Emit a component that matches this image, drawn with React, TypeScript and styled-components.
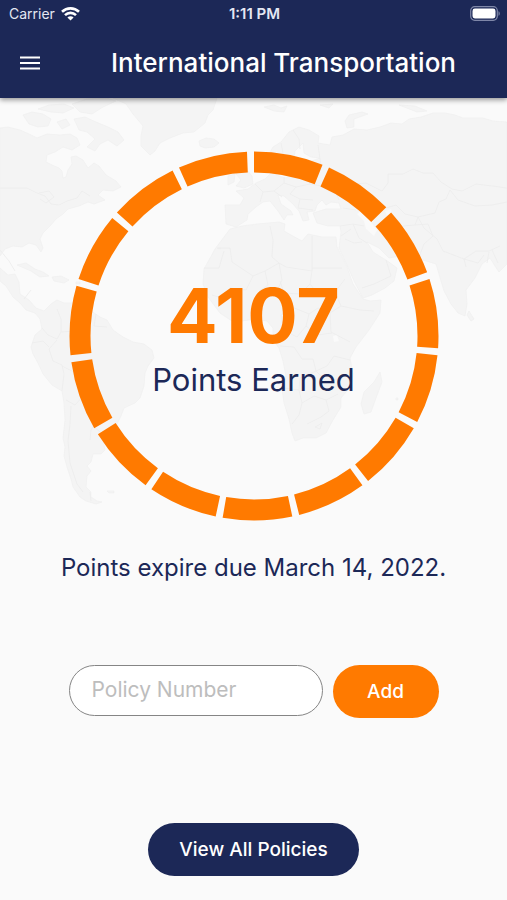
import React from "react";
import styled, { createGlobalStyle } from "styled-components";

const navy = "#1c2857";
const orange = "#ff7a00";

const GlobalStyle = createGlobalStyle`
  *, *::before, *::after { box-sizing: border-box; }
  body {
    margin: 0;
    background: #fafafa;
    color: ${navy};
    font-family: Inter, "Liberation Sans", sans-serif;
  }
  button, input { font: inherit; }
`;

const Screen = styled.div`
  display: flex;
  flex-direction: column;
  min-height: 100vh;
`;

const Header = styled.header`
  position: relative;
  z-index: 1;
  background: ${navy};
  color: #fff;
  box-shadow: 0 2px 5px rgba(0, 0, 0, 0.4);
`;

const StatusBar = styled.div`
  display: grid;
  grid-template-columns: 1fr auto 1fr;
  align-items: center;
  height: 27px;
  padding: 0 7px 0 9px;
  font-size: 14px;
  color: #e4e7f2;
`;

const Carrier = styled.span`
  display: flex;
  align-items: center;
  gap: 6px;
`;

const Clock = styled.time`
  font-size: 15px;
  font-weight: 600;
`;

const BatteryIcon = styled.svg`
  justify-self: end;
`;

const AppBar = styled.div`
  display: grid;
  grid-template-columns: 60px 1fr;
  align-items: center;
  height: 71px;
`;

const MenuButton = styled.button`
  display: grid;
  place-items: center;
  width: 60px;
  height: 60px;
  padding: 0;
  border: 0;
  background: none;
  color: inherit;
  cursor: pointer;
`;

const Title = styled.h1`
  margin: 0;
  font-size: 26px;
  font-weight: 500;
  line-height: 32px;
  text-align: center;
  white-space: nowrap;
`;

const Main = styled.main`
  position: relative;
  flex: 1;
  display: flex;
  flex-direction: column;
  align-items: center;
  padding: 53px 24px 24px;
`;

const WorldMap = styled.svg`
  position: absolute;
  top: 0;
  left: 0;
  width: 100%;
`;

const Gauge = styled.section`
  position: relative;
  display: grid;
  place-items: center;
  width: 100%;
  max-width: 370px;
  aspect-ratio: 1;

  > * { grid-area: 1 / 1; }
`;

const Ring = styled.svg`
  width: 100%;
  height: 100%;
`;

const Score = styled.div`
  display: flex;
  flex-direction: column;
  align-items: center;
  padding-top: 4px;
`;

const Points = styled.strong`
  color: ${orange};
  font-size: 75px;
  font-weight: 700;
  line-height: 84px;
`;

const PointsLabel = styled.span`
  font-size: 31px;
  line-height: 44px;
`;

const Expiry = styled.p`
  position: relative;
  margin: 31px 0 0;
  font-size: 24px;
  line-height: 32px;
  white-space: nowrap;
`;

const PolicyForm = styled.form`
  display: flex;
  align-items: flex-start;
  gap: 10px;
  width: 100%;
  max-width: 370px;
  margin-top: 81px;
`;

const PolicyInput = styled.input`
  flex: 1;
  min-width: 0;
  height: 51px;
  padding: 0 22px 2px;
  border: 1px solid #858585;
  border-radius: 26px;
  background: #fff;
  color: ${navy};
  font-size: 21px;
  outline-color: ${navy};

  &::placeholder { color: #bdbdbd; opacity: 1; }
`;

const PillButton = styled.button<{ $fill: string; $width: number }>`
  width: ${(p) => p.$width}px;
  height: 53px;
  padding: 0;
  border: 0;
  border-radius: 27px;
  background: ${(p) => p.$fill};
  color: #fff;
  font-size: 19px;
  font-weight: 500;
  cursor: pointer;
`;

const Footer = styled.div`
  margin-top: auto;
`;

const land = [
  // North America
  "M0 128L8 127 20 130 29 134 37 138 47 134 60 135 70 134 77 138 80 145 72 150 63 147 55 152 47 155 46 162 52 165 59 168 62 171 63 178 66 177 68 170 72 164 71 157 76 156 83 160 88 168 94 163 99 166 106 175 116 181 121 187 113 191 103 190 98 195 105 200 94 204 88 202 79 206 68 209 63 214 56 219 50 226 43 233 40 239 43 248 41 252 36 245 29 243 22 247 13 246 5 249 0 256Z",
  // Central and South America
  "M0 268L8 275 15 274 19 282 20 294 29 300 36 308 44 311 51 304 57 300 64 303 80 303 90 310 100 317 107 320 113 330 123 337 133 342 144 344 152 350 154 358 148 366 145 373 144 386 140 398 135 403 124 408 121 416 115 428 109 434 103 440 105 450 101 454 93 454 91 462 87 466 91 471 87 476 86 487 91 492 91 497 97 501 102 502 96 504 86 501 80 497 73 487 71 479 67 467 64 456 65 447 63 438 65 420 64 403 62 391 52 385 43 374 38 363 33 354 31 347 35 335 42 329 40 319 35 313 26 310 20 303 13 297 6 286 0 281Z",
  // Caribbean
  "M17 265L26 263 35 269 43 272 49 276 40 277 31 271ZM52 277L61 276 69 280 64 283 54 281ZM76 282h4v2h-4Z",
  // Arctic islands
  "M23 115L32 112 43 114 51 119 48 126 38 127 29 124ZM57 122L66 119 70 125 62 129ZM74 119L85 117 96 122 108 127 118 132 124 140 117 146 108 140 100 144 95 151 87 147 95 139 87 132 79 130ZM38 109L49 105 64 104 74 108 63 113 51 112ZM72 104L87 99 107 98 116 101 103 107 92 114 80 112Z",
  // Greenland
  "M113 98L126 104 133 114 143 126 141 136 141 146 150 155 155 151 160 143 170 138 183 133 194 132 205 123 208 115 213 110 217 98Z",
  // Iceland and Britain
  "M199 141L206 138 214 139 219 143 214 147 205 148 200 146ZM237 165L244 161 246 169 252 176 253 184 244 188 236 186 241 180 236 174ZM228 176L235 174 234 182 228 185Z",
  // Eurasia
  "M225 205L240 205 244 198 236 191 248 189 256 183 265 179 270 174 272 166 277 166 276 175 285 178 299 175 308 170 309 162 320 158 311 157 304 153 303 143 295 151 294 159 289 168 283 166 279 159 273 162 269 154 273 147 281 142 289 132 299 127 309 130 319 136 318 143 330 145 332 137 343 135 354 129 367 130 380 127 391 123 402 124 409 119 421 117 433 113 445 113 455 115 463 118 483 118 493 121 507 122 507 264 499 272 495 266 490 258 482 264 475 278 466 290 467 304 465 316 458 313 451 304 444 291 439 274 436 264 423 260 412 257 400 256 389 258 379 248 367 242 373 252 386 260 397 268 394 281 385 288 372 295 363 298 355 283 347 265 339 248 341 232 340 226 328 226 317 223 313 213 326 209 341 209 339 203 331 202 326 205 322 200 317 205 315 211 307 212 309 220 303 221 299 211 293 204 284 196 278 195 281 204 291 211 293 215 287 215 284 220 278 211 270 201 263 202 256 207 248 214 247 220 236 227 226 224Z",
  // Africa
  "M230 229L242 226 257 224 279 222 285 224 284 231 291 235 302 241 308 234 322 237 336 237 337 247 347 267 353 284 363 299 370 301 381 300 380 313 369 330 356 347 350 358 353 374 351 386 341 398 341 407 333 420 326 433 316 438 303 438 295 441 292 433 289 419 284 403 282 389 286 376 283 361 279 348 273 340 273 328 267 321 255 319 242 321 232 321 220 313 208 297 203 284 204 269 215 249Z",
  // Madagascar and smaller islands
  "M380 372L382 382 376 398 371 412 364 414 361 404 364 392 374 382ZM469 311L474 319 471 321 467 315ZM396 398h2v2h-2ZM107 491h7v2h-5ZM218 248h3v1h-3Z",
  "M345 121L349 115 362 112 368 114 354 119 354 127 347 128ZM264 107L274 105 281 108 287 106 284 112 274 111ZM320 105L333 104 329 108ZM399 105L415 106 427 111 417 112Z",
].join("");

const seas =
  "M357 214L362 210 371 213 370 221 377 230 374 236 366 229 364 221ZM333 336L337 335 339 341 334 342ZM385 211L391 209 392 214 387 216Z";

const borders = [
  "M0 188H27L37 193 45 196 51 204 59 205 67 201 77 198 82 191 90 196",
  "M39 193L49 191 54 197 46 203 40 199",
  "M0 250L9 261 15 271M24 299L31 290",
  "M42 328L48 335 57 339 61 332 61 319 57 309M61 332L75 331 84 327 90 319M96 314L94 326 107 327",
  "M32 343L43 341 49 347M57 340L49 349 53 361 62 365 64 374 62 391M62 366L76 373 82 384 84 395 75 405 66 400M82 384L92 391 97 403 89 408 98 418 91 430 90 440",
  "M71 406L70 424 68 441 70 463 77 484 83 492M88 407L103 416 94 427 105 436M90 492L91 501",
  "M217 248L230 248 232 262 253 276 265 271 279 263 272 257 273 240 270 226M279 263L286 267 312 271 312 236M204 268H219L224 251M253 276L246 290 230 288 225 299 212 295M265 271L268 285 259 291 260 318M279 263L282 280 277 291 262 292M312 271L310 284 300 294 284 293 280 281M312 268H342M310 284L318 294 335 292 345 279M335 292L341 306 330 313 318 308 309 314 292 307 284 293M341 306L360 310 374 311M330 313L331 332 350 342M309 314L306 326 317 335 332 333M292 307L281 315 283 330 275 337M283 330L297 337 306 326M280 346L294 347 302 359 313 359 316 371 300 378 299 390 284 388M316 371L327 366 334 356 350 360M316 371L326 381 337 379 340 390M299 390L302 403 299 415 292 424M302 403L314 396 326 400 329 411 321 417 307 424M326 400L338 394M317 426L322 423 320 429 315 427Z",
  "M255 184L263 192 260 202M263 192L274 191 284 183 284 177M274 191L282 197M284 183L296 187 310 184 309 172M296 187L290 194 300 199 313 200M310 184L322 186 335 191 339 200M309 172L321 166 318 145M300 199L298 208 313 210M281 143L284 158M293 130L299 139 300 149",
  "M335 191L347 191 353 184 366 183 382 191 388 183 388 174 403 174 413 169 423 173 433 173 441 182 452 189 462 191 476 184 492 186 507 188",
  "M450 190L458 200 475 206 492 205 507 202M450 190L446 199 439 202 435 213 418 217 424 228 437 239 443 251 464 259 476 251 489 251 500 246M386 208L396 205 405 214 418 217 415 225 403 226 398 237 399 254M415 225L428 224 433 236 424 244 419 257M464 259L466 267M489 252L487 263M340 226L353 224 364 226M353 224L359 238 367 243M341 236L351 229M345 239L354 243 362 242M386 260L391 276 374 284 362 288M343 208L356 210M464 259L478 263 484 255M492 250L498 263",
].join("");

const App = () => (
  <>
    <GlobalStyle />
    <Screen>
      <Header>
        <StatusBar>
          <Carrier>
            Carrier
            <svg width="19" height="14" viewBox="0 0 19 14" fill="none" stroke="#fff" strokeWidth="2.6" role="img" aria-label="Wi-Fi">
              <path d="M1 4.8C5.8.2 13.2.2 18 4.8M4 8.1c3.1-3 7.9-3 11 0" />
              <path d="M6.4 10.4c1.8-1.7 4.4-1.7 6.2 0L9.5 13.6Z" fill="#fff" stroke="none" />
            </svg>
          </Carrier>
          <Clock>1:11 PM</Clock>
          <BatteryIcon width="30" height="15" viewBox="0 0 30 15" role="img" aria-label="Battery full">
            <rect x=".7" y=".7" width="26.6" height="13.6" rx="4" fill="none" stroke="#7f87a8" strokeWidth="1.2" />
            <rect x="2.5" y="2.5" width="23" height="10" rx="2.4" fill="#fff" />
            <path d="M28.5 5.2c1.7.7 1.7 3.9 0 4.6Z" fill="#7f87a8" />
          </BatteryIcon>
        </StatusBar>
        <AppBar>
          <MenuButton type="button" aria-label="Open menu">
            <svg width="20" height="14" viewBox="0 0 20 14" stroke="currentColor" strokeWidth="2.2">
              <path d="M0 1.5H20M0 7H20M0 12.5H20" />
            </svg>
          </MenuButton>
          <Title>International Transportation</Title>
        </AppBar>
      </Header>
      <Main>
        <WorldMap viewBox="0 98 507 420" aria-hidden="true">
          <path d={land} fill="#f4f4f4" stroke="#efefef" strokeWidth=".7" strokeLinejoin="round" />
          <path d={seas} fill="#fafafa" />
          <path d={borders} fill="none" stroke="#ececec" strokeWidth=".8" strokeLinejoin="round" />
        </WorldMap>
        <Gauge>
          <Ring viewBox="0 0 370 370" aria-hidden="true">
            <circle
              cx="185"
              cy="185"
              r="174"
              fill="none"
              stroke={orange}
              strokeWidth="21"
              pathLength="360"
              strokeDasharray="21.8 2.2"
              transform="rotate(-90 185 185)"
            />
          </Ring>
          <Score>
            <Points>4107</Points>
            <PointsLabel>Points Earned</PointsLabel>
          </Score>
        </Gauge>
        <Expiry>Points expire due March 14, 2022.</Expiry>
        <PolicyForm onSubmit={(event) => event.preventDefault()}>
          <PolicyInput type="text" name="policy" aria-label="Policy Number" placeholder="Policy Number" />
          <PillButton type="submit" $fill={orange} $width={106}>Add</PillButton>
        </PolicyForm>
        <Footer>
          <PillButton type="button" $fill={navy} $width={211}>View All Policies</PillButton>
        </Footer>
      </Main>
    </Screen>
  </>
);

export default App;
